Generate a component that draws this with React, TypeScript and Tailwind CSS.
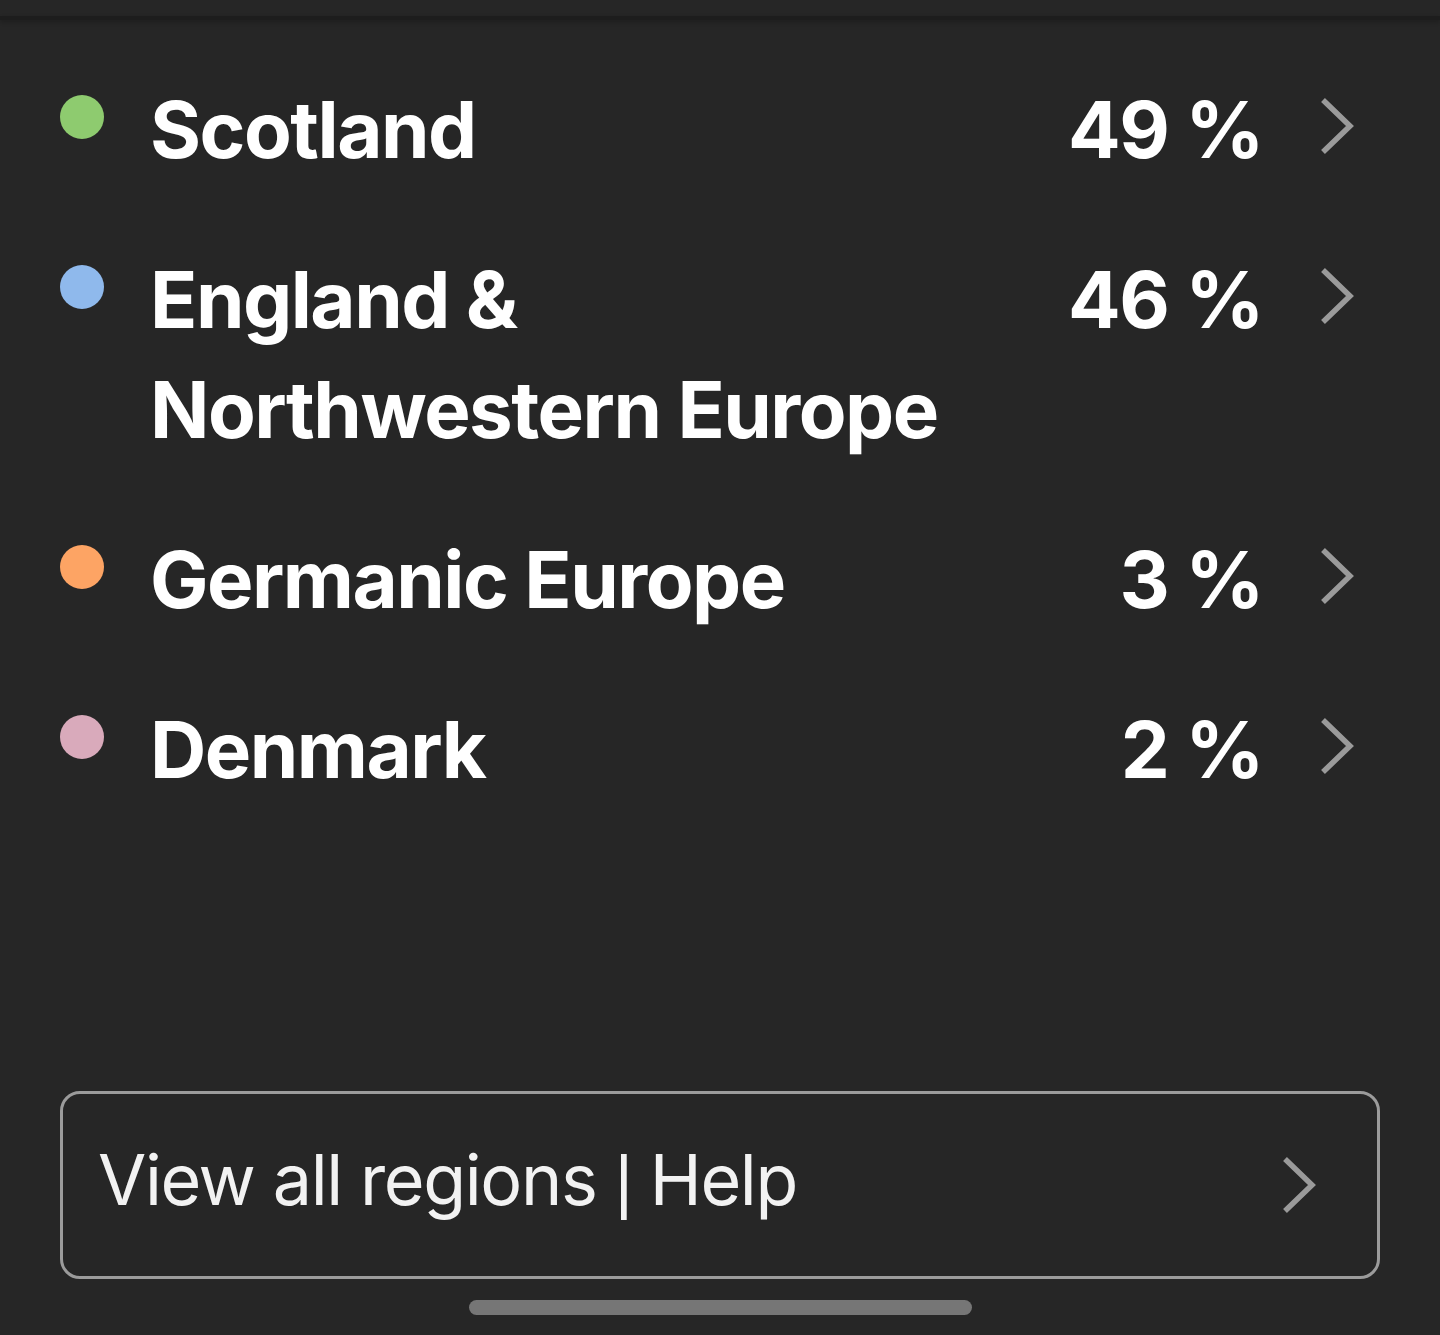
import React from 'react';

const regions = [
  { name: ['Scotland'], pct: '49', dot: 'bg-[#8ecb6f]' },
  { name: ['England &', 'Northwestern Europe'], pct: '46', dot: 'bg-[#8fb9ec]' },
  { name: ['Germanic Europe'], pct: '3', dot: 'bg-[#fda464]' },
  { name: ['Denmark'], pct: '2', dot: 'bg-[#d9aabb]' },
];

const Chevron: React.FC<{ className?: string }> = ({ className }) => (
  <svg viewBox="0 0 36 58" className={className} fill="none">
    <path d="M4 3 L31 29 L4 55" stroke="#9a9a9a" strokeWidth="5.5" />
  </svg>
);

const App: React.FC = () => {
  return (
    <div className="w-[1440px] h-[1335px] bg-[#262626] flex flex-col overflow-hidden" style={{ fontFamily: 'Inter, "Noto Sans", sans-serif' }}>
      <div className="h-[16px] shrink-0" />
      <div className="h-[4px] bg-[#1d1d1d] shrink-0 shadow-[0_2px_4px_rgba(0,0,0,0.25)]" />

      <div className="flex flex-col gap-[60px] pt-[55px] pl-[60px] pr-[85px]">
        {regions.map((r) => (
          <div key={r.pct} className="flex items-start">
            <div className={`w-[44px] h-[44px] rounded-full mt-[20px] shrink-0 ${r.dot}`} />
            <div className="ml-[46px] flex-1 text-white font-bold text-[78px] leading-[110px] tracking-[-1.5px]">
              {r.name.map((l) => (
                <div key={l}>{l}</div>
              ))}
            </div>
            <div className="text-white font-bold text-[78px] leading-[110px] tracking-[-1.5px]">{r.pct} %</div>
            <Chevron className="w-[36px] h-[58px] ml-[56px] mt-[22px] shrink-0" />
          </div>
        ))}
      </div>

      <div className="flex-1" />

      <div className="mx-[60px] h-[188px] border-[3px] border-[#9b9b9b] rounded-[20px] flex items-center pl-[35px] pr-[60px] pb-[10px]">
        <div className="flex-1 text-[#f2f2f2] text-[70px] tracking-[-1.4px]">
          View all regions <span style={{ fontFamily: '"Liberation Sans", sans-serif' }}>|</span> Help
        </div>
        <Chevron className="w-[36px] h-[58px] shrink-0 mt-[10px]" />
      </div>

      <div className="h-[21px] shrink-0" />
      <div className="mx-auto w-[503px] h-[15px] rounded-full bg-[#767676] shrink-0" />
      <div className="h-[20px] shrink-0" />
    </div>
  );
};

export default App;
